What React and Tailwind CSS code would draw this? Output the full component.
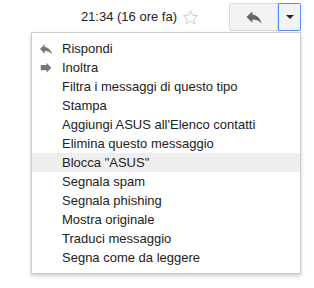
import React from 'react';

const items = [
  { label: 'Rispondi', icon: 'reply' },
  { label: 'Inoltra', icon: 'forward' },
  { label: 'Filtra i messaggi di questo tipo' },
  { label: 'Stampa' },
  { label: "Aggiungi ASUS all'Elenco contatti" },
  { label: 'Elimina questo messaggio' },
  { label: 'Blocca "ASUS"', active: true },
  { label: 'Segnala spam' },
  { label: 'Segnala phishing' },
  { label: 'Mostra originale' },
  { label: 'Traduci messaggio' },
  { label: 'Segna come da leggere' },
];

const ReplyIcon = ({ className }) => (
  <svg viewBox="0 0 24 24" className={className} fill="currentColor">
    <path d="M10 9V5l-7 7 7 7v-4.1c5 0 8.5 1.6 11 5.1-1-5-4-10-11-11z" />
  </svg>
);

const ForwardIcon = ({ className }) => (
  <svg viewBox="0 0 24 24" className={className} fill="currentColor">
    <path d="M13 7V3l8 8.5-8 8.5v-4H3V7z" />
  </svg>
);

const App = () => {
  return (
    <div className="relative w-[314px] h-[288px] bg-white font-['Liberation_Sans',Arial,sans-serif] text-[13px] text-[#222]">
      <div className="flex items-center justify-end pt-[3px] pr-[13px]">
        <span className="leading-[28px]">21:34 (16 ore fa)</span>
        <svg viewBox="0 0 24 24" className="ml-[5px] mr-[30px] w-[17px] h-[17px] text-[#c6c6c6]" fill="none" stroke="currentColor" strokeWidth="1.3">
          <path d="M12 2.5l2.9 6.3 6.8.7-5.1 4.6 1.5 6.8L12 17.4l-6.1 3.5 1.5-6.8-5.1-4.6 6.8-.7z" />
        </svg>
        <div className="flex h-[28px]">
          <button className="w-[49px] h-full flex items-center justify-center bg-[#f3f3f3] border border-[#dcdcdc] rounded-l-[2px] text-[#666]">
            <ReplyIcon className="w-[20px] h-[20px]" />
          </button>
          <button className="w-[23px] h-full flex items-center justify-center bg-[#f3f3f3] border border-[#4d90fe] rounded-r-[2px]">
            <span className="w-0 h-0 border-l-[4px] border-r-[4px] border-t-[4px] border-l-transparent border-r-transparent border-t-[#222]" />
          </button>
        </div>
      </div>

      <div className="absolute left-[31px] top-[32px] w-[270px] bg-white border border-[#ccc] shadow-[0_2px_4px_rgba(0,0,0,0.2)] py-[6px]">
        {items.map((item) => (
          <div
            key={item.label}
            className={`flex items-center h-[19px] pl-[30px] whitespace-nowrap relative ${item.active ? 'bg-[#eeeeee]' : ''}`}
          >
            {item.icon === 'reply' && (
              <ReplyIcon className="absolute left-[6px] top-[2px] w-[16px] h-[16px] text-[#777]" />
            )}
            {item.icon === 'forward' && (
              <ForwardIcon className="absolute left-[7px] top-[3px] w-[14px] h-[14px] text-[#777]" />
            )}
            {item.label}
          </div>
        ))}
      </div>
    </div>
  );
};

export default App;
